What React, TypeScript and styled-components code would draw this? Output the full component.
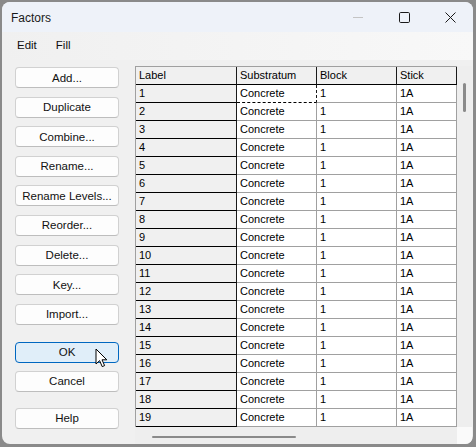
import styled, { createGlobalStyle } from "styled-components";

//types
type Row = {
  label: string;
  substratum: string;
  block: string;
  stick: string;
};

//styles
const GlobalStyle = createGlobalStyle`
  html, body {
    margin: 0;
    padding: 0;
    background: #8a8a8a;
    font-family: "Liberation Sans", Arial, sans-serif;
  }
  #root {
    width: 476px;
    height: 447px;
    overflow: hidden;
  }
`;

const Window = styled.div`
  margin: 2px 0 0 2px;
  width: 471px;
  height: 442px;
  border-radius: 8px;
  overflow: hidden;
  background: #f0f0f0;
  display: flex;
  flex-direction: column;
  position: relative;
`;

const TitleBar = styled.div`
  height: 30px;
  flex: none;
  display: flex;
  align-items: center;
  background: #eef2f9;
  padding-left: 9px;
`;

const Title = styled.div`
  flex: 1;
  font-size: 12px;
  color: #1a1a1a;
  padding-top: 1px;
`;

const CaptionButton = styled.div`
  width: 46px;
  height: 30px;
  display: flex;
  align-items: center;
  justify-content: center;
`;

const MenuBar = styled.div`
  height: 28px;
  flex: none;
  display: flex;
  align-items: center;
  padding-left: 15px;
  gap: 19px;
  background: linear-gradient(to right, #f0f0f0, #f8f8f8);
`;

const MenuItem = styled.span`
  font-size: 11.5px;
  color: #111;
  padding-bottom: 2px;
`;

const Content = styled.div`
  flex: 1;
  display: flex;
  padding: 6px 0 0 13px;
  gap: 16px;
  min-height: 0;
`;

const ButtonColumn = styled.div`
  width: 104px;
  flex: none;
  display: flex;
  flex-direction: column;
  padding-top: 1px;
`;

const Button = styled.button<{ $primary?: boolean; $gap?: number }>`
  height: 21px;
  width: 104px;
  margin-top: ${(p) => p.$gap ?? 0}px;
  border-radius: 4px;
  border: 1px solid ${(p) => (p.$primary ? "#0067c0" : "#d1d1d1")};
  border-bottom-color: ${(p) => (p.$primary ? "#0067c0" : "#bdbdbd")};
  background: ${(p) => (p.$primary ? "#e0eef9" : "#fdfdfd")};
  font-family: "Liberation Sans", Arial, sans-serif;
  font-size: 11.5px;
  color: #111;
  padding: 0;
`;

const TablePanel = styled.div`
  width: 337px;
  flex: none;
  display: grid;
  grid-template-columns: 322px 15px;
  grid-template-rows: 361px 17px;
`;

const GridView = styled.div`
  overflow: hidden;
  border-top: 1px solid #a0a0a0;
  border-left: 1px solid #a0a0a0;
  background: #fff;
`;

const GridRow = styled.div`
  display: grid;
  grid-template-columns: 101px 80px 80px 60px;
  height: 18px;
`;

const Cell = styled.div<{ $kind: "head" | "label" | "data"; $focus?: boolean }>`
  box-sizing: border-box;
  height: 18px;
  padding: 2px 0 0 3px;
  font-size: 11px;
  color: #000;
  white-space: nowrap;
  overflow: hidden;
  background: ${(p) => (p.$kind === "data" ? "#fff" : "#f0f0f0")};
  border-bottom: 1px ${(p) => (p.$focus ? "dashed" : "solid")}
    ${(p) => (p.$kind === "data" && !p.$focus ? "#a0a0a0" : "#000")};
  border-right: 1px ${(p) => (p.$focus ? "dashed" : "solid")}
    ${(p) =>
      p.$kind === "head" || p.$kind === "label" || p.$focus ? "#1a1a1a" : "#a0a0a0"};
`;

const VScroll = styled.div`
  background: #eeeeee;
  display: flex;
  justify-content: center;
  padding-top: 17px;
`;

const VThumb = styled.div`
  width: 3px;
  height: 29px;
  border-radius: 2px;
  background: #8a8a8a;
`;

const HScroll = styled.div`
  background: #eeeeee;
  padding: 9px 0 0 17px;
`;

const HThumb = styled.div`
  width: 144px;
  height: 2px;
  border-radius: 2px;
  background: #8a8a8a;
`;

const Corner = styled.div`
  background: #fafafa;
`;

const Pointer = styled.svg`
  position: absolute;
  left: 93px;
  top: 346px;
`;

const rows: Row[] = Array.from({ length: 19 }, (_, i) => ({
  label: String(i + 1),
  substratum: "Concrete",
  block: "1",
  stick: "1A",
}));

const buttons: { text: string; gap: number; primary?: boolean }[] = [
  { text: "Add...", gap: 0 },
  { text: "Duplicate", gap: 8.6 },
  { text: "Combine...", gap: 8.6 },
  { text: "Rename...", gap: 8.6 },
  { text: "Rename Levels...", gap: 8.6 },
  { text: "Reorder...", gap: 8.6 },
  { text: "Delete...", gap: 8.6 },
  { text: "Key...", gap: 8.6 },
  { text: "Import...", gap: 8.6 },
  { text: "OK", gap: 17, primary: true },
  { text: "Cancel", gap: 8 },
  { text: "Help", gap: 16 },
];

export default function App() {
  return (
    <>
      <GlobalStyle />
      <Window>
        <TitleBar>
          <Title>Factors</Title>
          <CaptionButton>
            <svg width="10" height="10" viewBox="0 0 10 10">
              <line x1="0" y1="5.5" x2="10" y2="5.5" stroke="#c4c4c4" strokeWidth="1" />
            </svg>
          </CaptionButton>
          <CaptionButton>
            <svg width="11" height="11" viewBox="0 0 11 11">
              <rect x="0.5" y="0.5" width="10" height="10" rx="1.2" fill="none" stroke="#1a1a1a" strokeWidth="1" />
            </svg>
          </CaptionButton>
          <CaptionButton>
            <svg width="11" height="11" viewBox="0 0 11 11">
              <path d="M0.5 0.5 L10.5 10.5 M10.5 0.5 L0.5 10.5" stroke="#1a1a1a" strokeWidth="1" />
            </svg>
          </CaptionButton>
        </TitleBar>
        <MenuBar>
          <MenuItem>Edit</MenuItem>
          <MenuItem>Fill</MenuItem>
        </MenuBar>
        <Content>
          <ButtonColumn>
            {buttons.map((b) => (
              <Button key={b.text} $gap={b.gap} $primary={b.primary}>
                {b.text}
              </Button>
            ))}
          </ButtonColumn>
          <TablePanel>
            <GridView>
              <GridRow>
                <Cell $kind="head">Label</Cell>
                <Cell $kind="head">Substratum</Cell>
                <Cell $kind="head">Block</Cell>
                <Cell $kind="head">Stick</Cell>
              </GridRow>
              {rows.map((r, i) => (
                <GridRow key={r.label}>
                  <Cell $kind="label">{r.label}</Cell>
                  <Cell $kind="data" $focus={i === 0}>
                    {r.substratum}
                  </Cell>
                  <Cell $kind="data">{r.block}</Cell>
                  <Cell $kind="data">{r.stick}</Cell>
                </GridRow>
              ))}
            </GridView>
            <VScroll>
              <VThumb />
            </VScroll>
            <HScroll>
              <HThumb />
            </HScroll>
            <Corner />
          </TablePanel>
        </Content>
        <Pointer width="13" height="20" viewBox="0 0 13 20">
          <path
            d="M1 1 L1 16 L4.6 12.6 L7.2 18.6 L9.6 17.6 L7 11.8 L11.8 11.8 Z"
            fill="#fff"
            stroke="#000"
            strokeWidth="1"
            strokeLinejoin="round"
          />
        </Pointer>
      </Window>
    </>
  );
}
